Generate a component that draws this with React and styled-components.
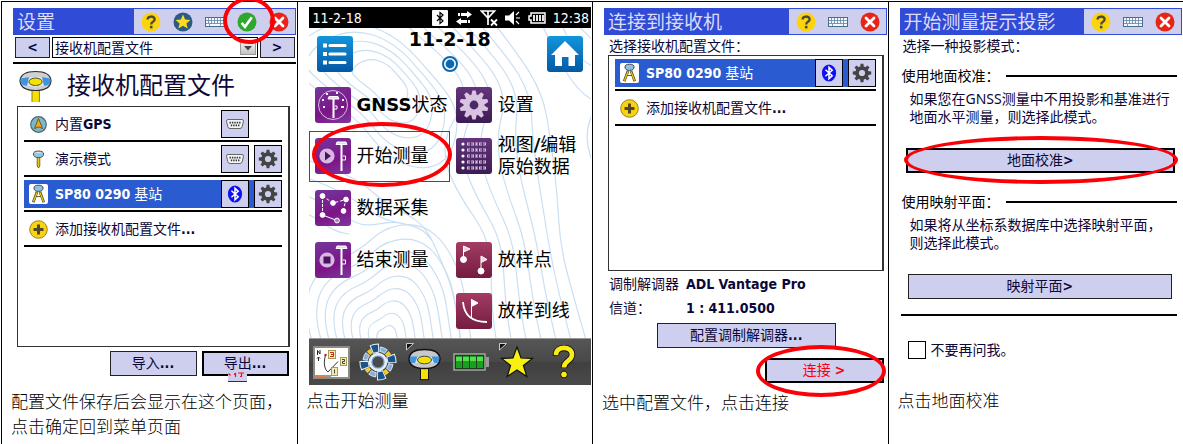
import React from "react";
import styled, { createGlobalStyle } from "styled-components";

const GlobalStyle = createGlobalStyle`
  *, *::before, *::after {
    box-sizing: border-box;
  }
  body {
    margin: 0;
    background: #fff;
    color: #0c0838;
    font-family: "DejaVu Sans Condensed", "Noto Sans CJK SC", sans-serif;
    font-size: 14px;
    line-height: 18px;
  }
  h2, h3, p, dl, dd, dt, ul {
    margin: 0;
    padding: 0;
    font-weight: 400;
  }
  ul {
    list-style: none;
  }
  button, select, input {
    margin: 0;
    padding: 0;
    font: inherit;
    color: inherit;
  }
  svg {
    display: block;
    flex-shrink: 0;
  }
`;

const Steps = styled.main`
  display: grid;
  grid-template-columns: repeat(4, minmax(0, 1fr));
  min-height: 100vh;
  padding: 1px 0 0 1px;
  overflow: hidden;
`;

const Step = styled.section`
  display: flex;
  flex-direction: column;
  border-top: 1px solid #000;
  border-left: 1px solid #000;
  padding-top: 6px;
`;

const Screen = styled.div`
  display: flex;
  flex-direction: column;
  margin: 0 1px 0 11px;
`;

const Caption = styled.p`
  padding: 0 0 0 9px;
  font-family: "Noto Sans CJK SC", sans-serif;
  font-size: 17px;
  font-weight: 300;
  line-height: 25px;
  color: #000;
`;

const TitleBar = styled.header`
  display: flex;
  justify-content: space-between;
  height: 27px;
  padding: 1px 1px 1px 4px;
  background: #304bd5;
  color: #dcdcf6;
`;

const Title = styled.h2`
  font-size: 19px;
  line-height: 26px;
  white-space: nowrap;
`;

const Tools = styled.div`
  display: flex;
  padding-left: 1px;
  background: #ceceee;
`;

const ToolButton = styled.button`
  position: relative;
  display: flex;
  align-items: center;
  justify-content: center;
  width: 32px;
  border: 0;
  background: none;
`;

const Ring = styled.span`
  position: absolute;
  z-index: 2;
  inset: ${props => props.$inset};
  border: 4px solid #fb0007;
  border-radius: 50%;
  pointer-events: none;
`;

const Button = styled.button`
  position: relative;
  height: 25px;
  width: ${props => props.$width || "auto"};
  border: ${props => (props.$primary ? "2px solid #000" : "1px solid #222")};
  background: #ceceee;
  color: ${props => props.$color || "inherit"};
  line-height: 17px;
  white-space: nowrap;
`;

const Nav = styled.nav`
  display: grid;
  grid-template-columns: 35px 1fr 35px;
  gap: 2px;
  margin-top: 2px;
  padding: 0 1px 4px 2px;
  border-bottom: 2px solid #000;
`;

const NavButton = styled(Button)`
  height: 21px;
  font-weight: 700;
`;

const SelectBox = styled.div`
  position: relative;
  height: 21px;
`;

const Select = styled.select`
  appearance: none;
  width: 100%;
  height: 100%;
  padding-left: 2px;
  border: 1px solid #000;
  border-radius: 0;
  background: #fff;
`;

const SelectArrow = styled.span`
  position: absolute;
  top: 3px;
  right: 2px;
  bottom: 3px;
  display: flex;
  align-items: center;
  padding: 0 3px;
  border: 1px solid #999;
  background: linear-gradient(#f4f4f4, #c4c4c4);
  pointer-events: none;
`;

const Heading = styled.div`
  display: flex;
  align-items: center;
  gap: 15px;
  height: 42px;
  padding: 2px 0 0 6px;
`;

const HeadingText = styled.h3`
  font-size: 24px;
  line-height: 32px;
`;

const ListBox = styled.ul`
  height: ${props => props.$height};
  margin: 0 ${props => props.$right} 0 4px;
  padding: 0 6px;
  border: 1px solid #333;
  border-right-width: 2px;
`;

const ListItem = styled.li`
  padding: 3px 0 2px;
  border-bottom: 2px solid #000;
`;

const ListRow = styled.div`
  display: flex;
  align-items: center;
  gap: 5px;
  height: 28px;
  padding-left: 5px;
  background: ${props => (props.$selected ? "#2a5bd0" : "none")};
  color: ${props => (props.$selected ? "#fff" : "inherit")};
`;

const ListLabel = styled.span`
  flex: 1;
  padding-left: 2px;
  white-space: nowrap;
`;

const SquareButton = styled.button`
  display: flex;
  align-items: center;
  justify-content: center;
  width: 28px;
  height: 28px;
  border: 1px solid #000;
  background: #ceceee;
`;

const ButtonBar = styled.div`
  display: flex;
  justify-content: flex-end;
  gap: 5px;
  padding: ${props => props.$padding};
`;

const Leftover = styled.span`
  position: absolute;
  top: 19px;
  left: 24px;
  width: 19px;
  height: 10px;
  border-bottom: 1px solid #333;
  background: #ceceee;
`;

const Spacer = styled.span`
  width: 28px;
`;

/* small icons */

const HelpIcon = () => (
  <svg width="20" height="20" viewBox="0 0 20 20">
    <circle cx="10" cy="10" r="9.5" fill="#fcd40c" />
    <path d="M6.6 7.6C6.6 3.6 13.6 3.6 13.6 7.4C13.6 10 10.2 9.6 10.2 12.4" fill="none" stroke="#4c4a3c" strokeWidth="2.4" />
    <rect x="8.9" y="13.8" width="2.6" height="2.6" fill="#4c4a3c" />
  </svg>
);

const StarIcon = () => (
  <svg width="20" height="20" viewBox="0 0 20 20">
    <circle cx="10" cy="10" r="9.5" fill="#2c5a82" />
    <path d="M10 2.6L12.1 7.5L17.4 7.9L13.4 11.4L14.7 16.6L10 13.8L5.3 16.6L6.6 11.4L2.6 7.9L7.9 7.5Z" fill="#fcdc20" />
  </svg>
);

const KeyboardIcon = () => (
  <svg width="20" height="12" viewBox="0 0 20 12">
    <rect x="0.5" y="1.5" width="19" height="9" fill="#f4f7fc" stroke="#4a6c8c" />
    <path d="M1 4.5H19M1 7.5H19M3.5 2V8M6.5 2V8M9.5 2V8M12.5 2V8M15.5 2V10M4.5 8V10" stroke="#6e8eac" strokeWidth="0.9" />
  </svg>
);

const CheckIcon = () => (
  <svg width="20" height="20" viewBox="0 0 20 20">
    <circle cx="10" cy="10" r="9.5" fill="#2ea82c" />
    <path d="M4.6 10.8L8 14.8L14.8 5.2" fill="none" stroke="#fff" strokeWidth="2.6" />
  </svg>
);

const CloseIcon = () => (
  <svg width="20" height="20" viewBox="0 0 20 20">
    <circle cx="10" cy="10" r="9.5" fill="#e82418" />
    <path d="M6 6L14 14M14 6L6 14" stroke="#fff" strokeWidth="2.8" strokeLinecap="round" />
  </svg>
);

const teeth = [0, 45, 90, 135, 180, 225, 270, 315];

const GearIcon = ({ size, color, hole }) => (
  <svg width={size} height={size} viewBox="0 0 20 20">
    <g fill={color}>
      <circle cx="10" cy="10" r="6.8" />
      {teeth.map(angle => (
        <path key={angle} d="M8.1 4.5L8.6 0.8H11.4L11.9 4.5Z" transform={`rotate(${angle} 10 10)`} />
      ))}
    </g>
    <circle cx="10" cy="10" r="3.1" fill={hole} />
  </svg>
);

const SerialIcon = () => (
  <svg width="18" height="10" viewBox="0 0 18 10">
    <path d="M2 0.5H16Q17.8 0.5 17.4 2.6L16.2 7.6Q15.8 9.5 14 9.5H4Q2.2 9.5 1.8 7.6L0.6 2.6Q0.2 0.5 2 0.5Z" fill="#f4f4f4" stroke="#666" />
    <path d="M3.5 3.6H14.8M4.8 6.4H13.6" stroke="#333" strokeWidth="1.6" strokeDasharray="1.4 1" />
  </svg>
);

const BluetoothIcon = () => (
  <svg width="16" height="18" viewBox="0 0 18 20">
    <ellipse cx="9" cy="10" rx="8" ry="9.6" fill="#1010f4" />
    <path d="M5 6.4L12.6 13L9 16.4V3.6L12.6 7L5 13.6" fill="none" stroke="#fff" strokeWidth="1.7" />
  </svg>
);

const GpsIcon = () => (
  <svg width="19" height="19" viewBox="0 0 19 19">
    <circle cx="9.5" cy="9.5" r="7.8" fill="#7cb8cc" stroke="#486878" strokeWidth="1.2" />
    <path d="M9.5 3.6L13.6 13.6L9.5 11.8L5.4 13.6Z" fill="#f8a81c" stroke="#6c4a14" strokeWidth="0.9" />
  </svg>
);

const PoleIcon = () => (
  <svg width="19" height="19" viewBox="0 0 19 19">
    <path d="M8.2 7H10.8V16L9.5 18L8.2 16Z" fill="#e8c818" stroke="#5c5010" strokeWidth="0.8" />
    <path d="M4.4 4Q4.4 1 9.5 1T14.6 4Q14.6 7.6 9.5 7.6T4.4 4Z" fill="#90c4e4" stroke="#555" />
    <path d="M5.4 3.2Q9.5 0.6 13.6 3.2Z" fill="#e4e4e4" />
  </svg>
);

const TripodIcon = () => (
  <svg width="19" height="20" viewBox="0 0 19 20">
    <rect width="19" height="20" rx="2" fill="#fff" />
    <path d="M8 8L4.2 18.2M11 8L14.800 18.2" stroke="#4c4410" strokeWidth="2.6" />
    <path d="M8 8.600L4.4 17.8M11 8.600L14.6 17.8" stroke="#e8c41c" strokeWidth="1.4" />
    <path d="M7 12.500H12" stroke="#6c6220" />
    <path d="M5 4Q5 1.2 9.5 1.2T14 4Q14 7.4 9.5 7.4T5 4Z" fill="#8cc0e4" stroke="#444" />
  </svg>
);

const AddIcon = () => (
  <svg width="19" height="19" viewBox="0 0 19 19">
    <circle cx="9.5" cy="9.5" r="8.8" fill="#f8d410" stroke="#9c8418" />
    <path d="M9.5 4.5V14.5M4.5 9.5H14.5" stroke="#504828" strokeWidth="3" />
  </svg>
);

const ReceiverIcon = () => (
  <svg width="33" height="32" viewBox="0 0 33 32">
    <rect x="13" y="18" width="7.4" height="15" fill="#f6e000" stroke="#8c8420" />
    <path d="M1 10.5Q2 1.5 16.5 1.5T32 10.5Q31.6 20.5 16.5 20.5T1 10.5Z" fill="#d0d0d0" stroke="#2c2c2c" strokeWidth="1.2" />
    <path d="M1.6 8.4Q16.5 5 31.4 8.4Q32.4 12 29.4 15Q16.5 18 3.6 15Q0.6 12 1.6 8.4Z" fill="#3e94e0" />
    <path d="M10 7.2Q16.5 5.8 23 7.2L25 16Q16.5 18 8 16Z" fill="#d8e6f0" />
    <ellipse cx="16.5" cy="11.8" rx="6.6" ry="3.7" fill="#f6e000" stroke="#5c5410" />
  </svg>
);

const WindowHeader = ({ title, full }) => (
  <TitleBar>
    <Title>{title}</Title>
    <Tools>
      <ToolButton aria-label="帮助"><HelpIcon /></ToolButton>
      {full && <ToolButton aria-label="收藏"><StarIcon /></ToolButton>}
      <ToolButton aria-label="键盘"><KeyboardIcon /></ToolButton>
      {full && (
        <ToolButton aria-label="确定">
          <CheckIcon />
          <Ring $inset="-12px -12px -10px -8px" />
        </ToolButton>
      )}
      <ToolButton aria-label="关闭"><CloseIcon /></ToolButton>
    </Tools>
  </TitleBar>
);

const GearButton = () => (
  <SquareButton aria-label="设置">
    <GearIcon size={20} color="#444" hole="#ceceee" />
  </SquareButton>
);

const BaseStation = () => (
  <ListItem>
    <ListRow $selected>
      <TripodIcon />
      <ListLabel><b>SP80 0290</b> 基站</ListLabel>
      <SquareButton aria-label="蓝牙"><BluetoothIcon /></SquareButton>
      <GearButton />
    </ListRow>
  </ListItem>
);

const AddProfile = () => (
  <ListItem>
    <ListRow>
      <AddIcon />
      <ListLabel>添加接收机配置文件<b>...</b></ListLabel>
    </ListRow>
  </ListItem>
);

const SettingsStep = () => (
  <Step>
    <Screen>
      <WindowHeader title="设置" full />
      <Nav>
        <NavButton>&lt;</NavButton>
        <SelectBox>
          <Select aria-label="页面">
            <option>接收机配置文件</option>
          </Select>
          <SelectArrow>
            <svg width="8" height="6" viewBox="0 0 8 6"><path d="M0 1H8L4 5.5Z" fill="#444" /></svg>
          </SelectArrow>
        </SelectBox>
        <NavButton>&gt;</NavButton>
      </Nav>
      <Heading>
        <ReceiverIcon />
        <HeadingText>接收机配置文件</HeadingText>
      </Heading>
      <ListBox $height="241px" $right="6px">
        <ListItem>
          <ListRow>
            <GpsIcon />
            <ListLabel>内置<b>GPS</b></ListLabel>
            <SquareButton aria-label="串口"><SerialIcon /></SquareButton>
            <Spacer />
          </ListRow>
        </ListItem>
        <ListItem>
          <ListRow>
            <PoleIcon />
            <ListLabel>演示模式</ListLabel>
            <SquareButton aria-label="串口"><SerialIcon /></SquareButton>
            <GearButton />
          </ListRow>
        </ListItem>
        <BaseStation />
        <AddProfile />
      </ListBox>
      <ButtonBar $padding="4px 7px 12px 0">
        <Button $width="87px">导入<b>...</b></Button>
        <Button $width="87px" $primary>
          导出<b>...</b>
          <Leftover>
            <svg width="19" height="6" viewBox="0 0 19 6">
              <path d="M0.5 1.500L2.500 3.500M6 2.500L8 1M7.500 2V5M10 1H16M13.500 1V4.5H12" fill="none" stroke="#f01020" strokeWidth="1.2" />
            </svg>
          </Leftover>
        </Button>
      </ButtonBar>
    </Screen>
    <Caption>
      配置文件保存后会显示在这个页面，
      <br />
      点击确定回到菜单页面
    </Caption>
  </Step>
);

/* main menu */

const StatusBar = styled.div`
  display: flex;
  align-items: center;
  justify-content: space-between;
  height: 21px;
  margin-top: -1px;
  padding: 0 2px 0 4px;
  background: #000;
  color: #fff;
`;

const StatusIcons = styled.div`
  display: flex;
  align-items: center;
  gap: 7px;
`;

const Menu = styled.div`
  position: relative;
  display: flex;
  flex-direction: column;
  height: 310px;
  padding-bottom: 1px;
  color: #000;
`;

const Contours = styled.svg`
  position: absolute;
  inset: 0;
  width: 100%;
  height: 100%;
`;

const MenuHeader = styled.div`
  position: relative;
  display: flex;
  justify-content: space-between;
  height: 51px;
  padding: 8px 8px 0;
`;

const MenuTitle = styled.div`
  display: flex;
  flex-direction: column;
  align-items: center;
  gap: 6px;
`;

const JobName = styled.h2`
  margin-top: -8px;
  font-family: "DejaVu Sans", sans-serif;
  font-size: 19px;
  font-weight: 700;
  line-height: 22px;
`;

const BlueButton = styled.button`
  width: 36px;
  height: 36px;
  border: 0;
  border-radius: 3px;
  background: linear-gradient(#1296dc, #0458a4);
`;

const Tiles = styled.div`
  position: relative;
  flex: 1;
  display: grid;
  grid-template-columns: 1fr 1fr;
  grid-template-rows: repeat(5, 1fr);
`;

const Tile = styled.button`
  position: relative;
  grid-column: ${props => props.$col};
  grid-row: ${props => props.$row};
  display: flex;
  align-items: center;
  gap: 6px;
  padding-left: 5px;
  border: 1px solid ${props => (props.$marked ? "#f00" : "transparent")};
  background: none;
  font-family: "DejaVu Sans", "Noto Sans CJK SC", sans-serif;
  font-size: 18px;
  line-height: 22px;
  text-align: left;
  white-space: nowrap;
`;

const TileIcon = styled.svg`
  width: 36px;
  height: 36px;
  border-radius: 3px;
  background: ${props => props.$tone};
`;

const purple = "linear-gradient(160deg, #74389c, #7c1488 60%, #80389c)";
const violet = "linear-gradient(#64347c, #3c1c54)";
const wine = "linear-gradient(#a43c64, #741c40)";

const Dock = styled.div`
  display: grid;
  grid-template-columns: repeat(6, 1fr);
  height: 47px;
  margin-bottom: 2px;
  padding-right: 4px;
  border-top: 1px solid #999;
  background: linear-gradient(#565656, #484848 50%, #404040 51%, #4a4a4a);
`;

const DockButton = styled.button`
  display: flex;
  align-items: center;
  justify-content: center;
  border: 0;
  background: none;
`;

const hills = [0.14, 0.26, 0.38, 0.5, 0.62, 0.74, 0.86, 0.98, 1.12];
const loops = [0.36, 0.54, 0.72, 0.9, 1.08];
const slopes = [0, 1, 2, 3, 4, 5, 6];

const ContourMap = () => (
  <Contours viewBox="0 0 283 310" preserveAspectRatio="none">
    <g fill="none" stroke="#cbdff2" strokeWidth="1.2">
      {hills.map(k => (
        <path
          key={k}
          vectorEffect="non-scaling-stroke"
          transform={`translate(78 312) scale(${k})`}
          d="M-66 4C-82 -46 -62 -64 -38 -74S-12 -98 10 -102C40 -108 54 -84 62 -66S70 -30 76 4"
        />
      ))}
      {loops.map(k => (
        <path
          key={k}
          vectorEffect="non-scaling-stroke"
          transform={`translate(74 50) scale(${k})`}
          d="M-70 -38C-30 -66 10 -44 34 -16S76 26 66 60S16 88 -8 58S-34 34 -60 12S-96 -16 -70 -38Z"
        />
      ))}
      {slopes.map(i => (
        <path
          key={i}
          d={`M${96 + i * 15} -4C${134 + i * 13} 30 ${172 + i * 10} 54 ${148 + i * 15} 88S${140 + i * 18} 152 ${166 + i * 14} 190S${176 + i * 14} 250 ${188 + i * 15} 314`}
        />
      ))}
      <path d="M234 -2C250 30 262 60 284 72M254 -2C262 18 270 32 284 38M270 -2L284 12M284 86C274 106 280 124 284 134" />
      <path d="M-2 132C20 140 44 146 66 166S110 184 124 214S148 266 152 314M-2 150C28 160 46 172 66 186S110 190 124 214M-2 168C18 176 30 186 46 194S80 190 96 196M-2 186C14 192 20 204 40 206" />
    </g>
  </Contours>
);

const Receiver = () => (
  <g stroke="#fff" fill="none">
    <path d="M26.5 7V33" strokeWidth="2" />
    <path d="M22 4H31L32 6.5H21Z" fill="#e8dcf0" />
    <path d="M28 18H30.5V22H27" />
  </g>
);

const tiles = [
  {
    col: 1, row: 1, tone: purple, label: <><b>GNSS</b>状态</>,
    art: (
      <g fill="none" stroke="#fff">
        <circle cx="18" cy="18" r="14.500" strokeWidth="0.7" />
        <path d="M18.5 12V31" strokeWidth="2" />
        <path d="M14 9.5H23L24 12H13Z" fill="#e8dcf0" />
        <path d="M20 19H22V22H19" />
        <path d="M7 13H9M8 20H10M26 20H29M21 6H23M27 13H29M11 7H13" strokeWidth="2" />
      </g>
    ),
  },
  {
    col: 2, row: 1, tone: violet, label: "设置",
    art: (
      <g transform="translate(18 18)" fill="#d8c4e0">
        {[0, 36, 72, 108, 144, 180, 216, 252, 288, 324].map(a => (
          <path key={a} d="M-3 -9L-1.6 -14.500H1.6L3 -9Z" transform={`rotate(${a})`} />
        ))}
        <circle r="10.4" />
        <circle r="4.4" fill="#4c2864" />
      </g>
    ),
  },
  {
    col: 1, row: 2, tone: purple, label: "开始测量", marked: true,
    art: (
      <g>
        <circle cx="12" cy="18" r="7.6" fill="#d8b8e0" />
        <path d="M10 13.6L16 18L10 22.4Z" fill="#4c1060" />
        <Receiver />
      </g>
    ),
  },
  {
    col: 2, row: 2, tone: violet, label: <>视图<b>/</b>编辑<br />原始数据</>,
    art: [6, 12, 18, 24, 30].map(y => (
      <g key={y}>
        <circle cx="7" cy={y} r="1.6" fill="#fff" />
        <path d={`M11 ${y}H31`} stroke="#d4c4dc" strokeWidth="3" strokeDasharray="3 1" />
        <path d={`M12 ${y}H30`} stroke="#50306c" strokeWidth="1.200" strokeDasharray="2 1" />
      </g>
    )),
  },
  {
    col: 1, row: 3, tone: purple, label: "数据采集",
    art: (
      <g fill="#fff" stroke="#fff">
        <path d="M7.5 6L18 13L31 9.5L28 21" fill="none" strokeDasharray="3 2" />
        <path d="M7.5 6V25" fill="none" strokeDasharray="3 1" />
        <path d="M7.5 25L22 30.5" fill="none" />
        <circle cx="7.5" cy="6" r="2.4" />
        <circle cx="18" cy="13" r="2.4" />
        <circle cx="31" cy="9.5" r="2.4" />
        <circle cx="28.5" cy="21" r="2.4" />
        <circle cx="7.5" cy="25" r="2.4" />
        <circle cx="22" cy="30.5" r="2.4" fill="#b080c0" />
      </g>
    ),
  },
  {
    col: 1, row: 4, tone: purple, label: "结束测量",
    art: (
      <g>
        <circle cx="12" cy="18" r="7.6" fill="#d8b8e0" />
        <rect x="8.5" y="14.5" width="7" height="7" fill="#4c1060" />
        <Receiver />
      </g>
    ),
  },
  {
    col: 2, row: 4, tone: wine, label: "放样点",
    art: (
      <g fill="#fff" stroke="#fff">
        <path d="M7.5 16V4L14 7L7.5 10M25 28V14L31 17.5L25 20.5" fill="#ecd4dc" />
        <circle cx="7.5" cy="17.5" r="3" />
        <circle cx="25" cy="29" r="3" />
      </g>
    ),
  },
  {
    col: 2, row: 5, tone: wine, label: "放样到线",
    art: (
      <g fill="none" stroke="#fff">
        <path d="M7 9C8 22 15 29 31 29" strokeWidth="1.8" />
        <path d="M15.5 26V6" />
        <path d="M15.5 6.5L22 10L15.5 13.5Z" fill="#fff" />
      </g>
    ),
  },
];

const DockMap = () => (
  <svg width="37" height="33" viewBox="0 0 37 33">
    <rect x="1" y="1" width="35" height="31" fill="#fff" stroke="#8c8c84" strokeWidth="2" />
    <path d="M4.5 9V4.5L7 8V4M5.5 15V11L4 12.5M5.5 11L7 12.5" fill="none" stroke="#222" />
    <path d="M12.5 9C10 18 12 24 15 26L25 15.5" fill="none" stroke="#333" />
    <g fill="#f4ecb0" stroke="#a89c50">
      <rect x="15.5" y="4.5" width="7" height="8" />
      <rect x="27.5" y="11.5" width="6" height="8" />
      <rect x="18.5" y="21.5" width="6" height="8" />
    </g>
    <path d="M17 6.5H20.5V10.5H17M18 8.5H20" fill="none" stroke="#c03020" />
    <path d="M29 13.5H31.5V15.5H29.5V17.5H32M21.5 23.5V27.5" fill="none" stroke="#444" />
    <circle cx="12.5" cy="9" r="1.2" fill="#b02020" />
    <path d="M2 30H12" stroke="#e47c44" strokeWidth="2" />
    <path d="M12 30H18" stroke="#999" strokeWidth="2" />
  </svg>
);

const DockRing = () => (
  <svg width="38" height="38" viewBox="-19 -19 38 38">
    {[0, 90, 180, 270].map(a => (
      <g key={a} transform={`rotate(${a - 12})`}>
        <path d="M-4.2 -17.600Q0 -18.6 4.2 -17.6L2.8 -9.6H-2.8Z" fill="#1a5488" stroke="#e8f0f8" />
        <path d="M5.5 -14.2Q9 -12.8 11.6 -10L8 -7Q6.4 -9 4 -10Z" fill="#84b0dc" stroke="#e8f0f8" strokeWidth="0.8" />
        <path d="M12.6 -8.6Q14 -6.8 14.5 -4.5L9.6 -3.4Q9.2 -5 8.4 -6.2Z" fill="#f0cc28" />
      </g>
    ))}
    <circle r="7.6" fill="#4a4a4a" stroke="#e4eef8" strokeWidth="3.4" />
    <circle r="6" fill="none" stroke="#6898cc" strokeWidth="1.2" />
  </svg>
);

const Corner = () => (
  <path d="M0.5 0.5H7.5L0.5 7Z" fill="#111" stroke="#ddd" strokeWidth="0.9" />
);

const DockReceiver = () => (
  <svg width="37" height="38" viewBox="0 0 37 38">
    <Corner />
    <g transform="translate(2 5)">
      <rect x="12.5" y="18" width="8" height="13.6" fill="#f6e000" stroke="#111" />
      <path d="M1 10.5Q2 1.5 16.5 1.5T32 10.5Q31.6 20.5 16.5 20.5T1 10.5Z" fill="#c8c8c8" stroke="#111" strokeWidth="1.5" />
      <path d="M2 8.4H31.4Q32 12 29.4 15H3.6Q1 12 2 8.4Z" fill="#3e94e0" />
      <path d="M9.5 8.4H23.5L26 15H7Z" fill="#d8e6f0" />
      <ellipse cx="16.5" cy="12" rx="7" ry="3.8" fill="#f6e000" stroke="#444" />
    </g>
  </svg>
);

const DockBattery = () => (
  <svg width="36" height="18" viewBox="0 0 36 18">
    <rect x="1" y="1" width="31" height="16" fill="#1c3c1c" stroke="#aaa" strokeWidth="1.4" />
    <rect x="33" y="4" width="3" height="10" fill="#999" />
    {[3, 10, 17, 24].map(x => (
      <g key={x}>
        <rect x={x} y="3" width="6" height="12" fill="#18a020" />
        <rect x={x} y="4" width="6" height="4" fill="#58dc50" />
      </g>
    ))}
  </svg>
);

const DockStar = () => (
  <svg width="36" height="38" viewBox="0 0 36 38">
    <Corner />
    <path d="M18 4L22 15L33.5 15.4L24.4 22.4L27.8 33.5L18 27L8.2 33.5L11.6 22.4L2.5 15.4L14 15Z" fill="#f8f010" stroke="#111" strokeWidth="1.2" />
  </svg>
);

const DockHelp = () => (
  <svg width="24" height="34" viewBox="0 0 24 34">
    <path d="M4 10.5C3.500 0.5 20.5 0.5 20 10C19.5 16.5 12 15.500 12 23" fill="none" stroke="#111" strokeWidth="6.4" />
    <path d="M4 10C3.5 0.5 20.5 0.5 20 10C19.5 16.5 12 15.500 12 22.500" fill="none" stroke="#f8ec18" strokeWidth="4.600" />
    <circle cx="12" cy="29.5" r="3.4" fill="#f8ec18" stroke="#111" />
  </svg>
);

const MenuStep = () => (
  <Step>
    <Screen>
      <StatusBar>
        <span>11-2-18</span>
        <StatusIcons>
          <svg width="16" height="16" viewBox="0 0 16 16">
            <rect width="16" height="16" rx="1" fill="#fff" />
            <path d="M5 5L11 11L8 13.5V2.5L11 5L5 11" fill="none" stroke="#000" strokeWidth="1.2" />
          </svg>
          <svg width="18" height="14" viewBox="0 0 18 14">
            <path d="M3 2H5V5H3ZM6 2H12V0L17 3.500L12 7V5H6ZM15 9H13V12H15ZM12 9H6V7L1 10.500L6 14V12H12Z" fill="#fff" />
          </svg>
          <svg width="18" height="18" viewBox="0 0 18 18">
            <path d="M1.5 2H14.5L8 9ZM8 2V16" fill="none" stroke="#fff" strokeWidth="1.7" />
            <path d="M11 10.500L17 16.500M17 10.500L11 16.500" stroke="#fff" strokeWidth="1.8" />
          </svg>
          <svg width="16" height="16" viewBox="0 0 16 16">
            <path d="M0 5.5H4L9 1V15L4 10.5H0Z" fill="#fff" />
            <path d="M11 5L14 2M11 8H15M11 11L14 14" stroke="#fff" strokeWidth="1.2" />
          </svg>
          <svg width="18" height="12" viewBox="0 0 18 12">
            <path d="M3 1H17V11H3V8H1V4H3Z" fill="none" stroke="#fff" strokeWidth="1.5" />
            <path d="M6 3V9M9 3V9M12 3V9M15 3V9" stroke="#fff" strokeWidth="1.800" />
          </svg>
          <span>12:38</span>
        </StatusIcons>
      </StatusBar>
      <Menu>
        <ContourMap />
        <MenuHeader>
          <BlueButton aria-label="列表">
            <svg width="36" height="36" viewBox="0 0 36 36">
              <path d="M13 9.500H28M13 18H28M13 26.500H28" stroke="#fff" strokeWidth="3.200" strokeLinecap="round" />
              <path d="M6 7.500H10V11.5H6ZM6 16H10V20H6ZM6 24.5H10V28.500H6Z" fill="#fff" />
            </svg>
          </BlueButton>
          <MenuTitle>
            <JobName>11-2-18</JobName>
            <svg width="16" height="16" viewBox="0 0 16 16">
              <circle cx="8" cy="8" r="7" fill="#fff" stroke="#0a68b0" strokeWidth="2" />
              <circle cx="8" cy="8" r="4.4" fill="#0a68b0" />
            </svg>
          </MenuTitle>
          <BlueButton aria-label="主页">
            <svg width="36" height="36" viewBox="0 0 36 36">
              <path d="M18 5L32 19H28V30H21.5V21H15V30H8V19H4Z" fill="#fff" />
            </svg>
          </BlueButton>
        </MenuHeader>
        <Tiles>
          {tiles.map(tile => (
            <Tile key={`${tile.col}-${tile.row}`} $col={tile.col} $row={tile.row} $marked={tile.marked}>
              <TileIcon $tone={tile.tone} viewBox="0 0 36 36">{tile.art}</TileIcon>
              <span>{tile.label}</span>
              {tile.marked && <Ring $inset="-10px -3px -6px 2px" />}
            </Tile>
          ))}
        </Tiles>
      </Menu>
      <Dock>
        <DockButton aria-label="地图"><DockMap /></DockButton>
        <DockButton aria-label="状态"><DockRing /></DockButton>
        <DockButton aria-label="接收机"><DockReceiver /></DockButton>
        <DockButton aria-label="电池"><DockBattery /></DockButton>
        <DockButton aria-label="收藏"><DockStar /></DockButton>
        <DockButton aria-label="帮助"><DockHelp /></DockButton>
      </Dock>
    </Screen>
    <Caption>点击开始测量</Caption>
  </Step>
);

/* connect to receiver */

const Prompt = styled.p`
  padding: 2px 0 0 ${props => props.$indent || "5px"};
`;

const ModemInfo = styled.dl`
  display: grid;
  grid-template-columns: 77px 1fr;
  row-gap: 6px;
  padding: 4px 0 6px 5px;
  white-space: nowrap;

  dd {
    font-weight: 700;
  }
`;

const CenterRow = styled.div`
  display: flex;
  justify-content: center;
  padding-left: 2px;
`;

const ConnectStep = () => (
  <Step>
    <Screen>
      <WindowHeader title="连接到接收机" />
      <Prompt>选择接收机配置文件：</Prompt>
      <ListBox $height="216px" $right="3px">
        <BaseStation />
        <AddProfile />
      </ListBox>
      <ModemInfo>
        <dt>调制解调器</dt>
        <dd>ADL Vantage Pro</dd>
        <dt>信道：</dt>
        <dd>1 : 411.0500</dd>
      </ModemInfo>
      <CenterRow>
        <Button $width="179px">配置调制解调器<b>...</b></Button>
      </CenterRow>
      <ButtonBar $padding="10px 3px 6px 0">
        <Button $width="119px" $primary $color="#fb0007">
          连接 <b>&gt;</b>
          <Ring $inset="-15px -4px -16px -11px" />
        </Button>
      </ButtonBar>
    </Screen>
    <Caption>选中配置文件，点击连接</Caption>
  </Step>
);

/* projection prompt */

const ModeTitle = styled.h3`
  display: flex;
  align-items: center;
  gap: 6px;
  padding: 0 5px 0 2px;
  color: #000;
  font-size: 14px;
  white-space: nowrap;

  &::after {
    content: "";
    flex: 1;
    height: 2px;
    background: #000;
  }
`;

const ModeText = styled.p`
  padding: 5px 0 0 10px;
  font-family: "Noto Sans", "Noto Sans CJK SC", sans-serif;
  white-space: nowrap;
`;

const Mode = styled.section`
  display: flex;
  flex-direction: column;
  padding-top: ${props => props.$top};

  ${Button} {
    margin: 22px ${props => (props.$wide ? "7px 0 6px" : "10px 0 8px")};
  }
`;

const AskAgain = styled.label`
  display: flex;
  align-items: center;
  gap: 5px;
  margin: 15px 5px 0 1px;
  padding: 25px 0 28px 7px;
  border-top: 2px solid #000;
`;

const Checkbox = styled.input`
  appearance: none;
  width: 18px;
  height: 18px;
  border: 1px solid #000;
  background: #fff;
`;

const ProjectionStep = () => (
  <Step>
    <Screen>
      <WindowHeader title="开始测量提示投影" />
      <Prompt $indent="3px">选择一种投影模式：</Prompt>
      <Mode $top="12px" $wide>
        <ModeTitle>使用地面校准：</ModeTitle>
        <ModeText>
          如果您在GNSS测量中不用投影和基准进行
          <br />
          地面水平测量，则选择此模式。
        </ModeText>
        <Button $primary>
          地面校准<b>&gt;</b>
          <Ring $inset="-14px -5px -13px -4px" />
        </Button>
      </Mode>
      <Mode $top="20px">
        <ModeTitle>使用映射平面：</ModeTitle>
        <ModeText>
          如果将从坐标系数据库中选择映射平面，
          <br />
          则选择此模式。
        </ModeText>
        <Button>映射平面<b>&gt;</b></Button>
      </Mode>
      <AskAgain>
        <Checkbox type="checkbox" />
        不要再问我。
      </AskAgain>
    </Screen>
    <Caption>点击地面校准</Caption>
  </Step>
);

const App = () => (
  <>
    <GlobalStyle />
    <Steps>
      <SettingsStep />
      <MenuStep />
      <ConnectStep />
      <ProjectionStep />
    </Steps>
  </>
);

export default App;
